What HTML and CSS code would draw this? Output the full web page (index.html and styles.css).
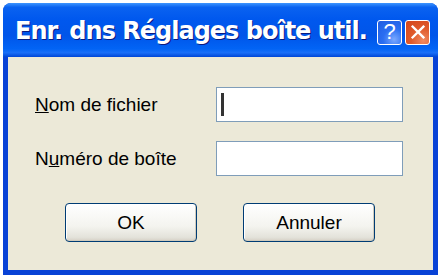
FILE: index.html
```html
<!DOCTYPE html>
<html lang="fr">
<head>
<meta charset="utf-8">
<title>Enr. dns Réglages boîte util.</title>
<link rel="stylesheet" href="styles.css">
</head>
<body>
<div class="window">
  <div class="titlebar">
    <span class="title">Enr. dns Réglages boîte util.</span>
    <div class="tb-buttons">
      <span class="tb-btn help">?</span>
      <span class="tb-btn close">
        <svg viewBox="0 0 20 20" width="18" height="18"><path d="M4 4 L16 16 M16 4 L4 16" stroke="#fff" stroke-width="2.6" stroke-linecap="square" fill="none"/></svg>
      </span>
    </div>
  </div>
  <div class="body">
    <div class="row">
      <label class="label"><u>N</u>om de fichier</label>
      <div class="input"><span class="caret"></span></div>
    </div>
    <div class="row">
      <label class="label">N<u>u</u>méro de boîte</label>
      <div class="input"></div>
    </div>
    <div class="actions">
      <button class="btn">OK</button>
      <button class="btn">Annuler</button>
    </div>
  </div>
</div>
</body>
</html>
```
FILE: styles.css
```css
html, body {
  margin: 0;
  padding: 0;
  background: #fff;
}
body {
  width: 442px;
  height: 279px;
  overflow: hidden;
}
.window {
  margin: 3px 0 0 3px;
  width: 435px;
  height: 272px;
  display: flex;
  flex-direction: column;
  border-radius: 8px 8px 0 0;
  background: #0842d6;
  overflow: hidden;
}
.titlebar {
  height: 54px;
  flex: none;
  display: flex;
  align-items: center;
  justify-content: space-between;
  padding: 0 8px 0 12px;
  background: linear-gradient(#3d95ff 0%, #0a62f0 8%, #0058ee 30%, #0055e9 60%, #0264f5 85%, #1a6ff8 92%, #0046d6 100%);
}
.title {
  flex: none;
  font-family: "DejaVu Sans", sans-serif;
  font-weight: bold;
  font-size: 24px;
  letter-spacing: -1px;
  color: #fff;
  text-shadow: 1px 1px 0 #0a1a80;
  white-space: nowrap;
  margin-top: 2px;
}
.tb-buttons {
  flex: none;
  display: flex;
  gap: 3px;
  margin-top: 4px;
}
.tb-btn {
  width: 23px;
  height: 23px;
  border: 1px solid #fff;
  border-radius: 3px;
  display: flex;
  align-items: center;
  justify-content: center;
  color: #fff;
}
.help {
  background: radial-gradient(circle at 70% 80%, #7aa8ff 0%, #2a6ff2 45%, #1f5be0 100%);
  font-family: "Liberation Sans", Arial, sans-serif;
  font-size: 22px;
  font-weight: normal;
  line-height: 1;
}
.close {
  background: radial-gradient(circle at 75% 85%, #f08a60 0%, #e05b2c 45%, #d2441a 100%);
}
.body {
  flex: 1;
  margin: 0 5px 5px 5px;
  background: #ece9d8;
  padding: 30px 0 0 27px;
  display: flex;
  flex-direction: column;
}
.row {
  display: flex;
  align-items: center;
  height: 35px;
  margin-bottom: 19px;
}
.label {
  width: 181px;
  font-family: "Liberation Sans", Arial, sans-serif;
  font-size: 19px;
  color: #000;
}
.input {
  width: 181px;
  height: 33px;
  border: 1px solid #7f9db9;
  background: #fff;
  display: flex;
  align-items: center;
  padding-left: 4px;
  box-sizing: content-box;
}
.caret {
  width: 3px;
  height: 23px;
  background: #333;
}
.actions {
  display: flex;
  gap: 46px;
  margin-top: 8px;
  padding-left: 30px;
}
.btn {
  width: 132px;
  height: 39px;
  border: 1px solid #003c74;
  border-radius: 4px;
  background: linear-gradient(#ffffff 0%, #f4f4ef 60%, #e3e2da 90%, #d6d0c5 100%);
  box-shadow: inset -1px -1px 0 #d0cbbd, inset 1px 1px 0 #fff;
  font-family: "Liberation Sans", sans-serif;
  font-size: 19px;
  color: #000;
  padding: 0;
}
```
